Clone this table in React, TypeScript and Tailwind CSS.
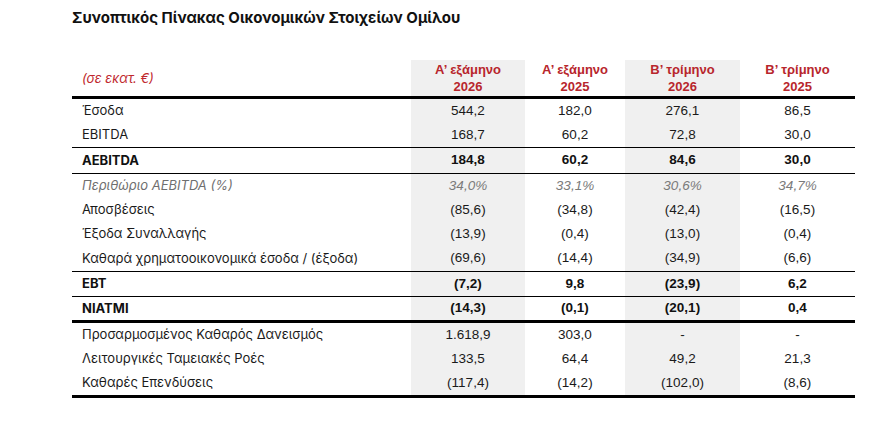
import React from "react";

type Row = {
  label: string;
  vals: string[];
  kind?: "bold" | "italic";
  h: string;
  border?: "thin" | "thick";
};

const rows: Row[] = [
  { label: "Έσοδα", vals: ["544,2", "182,0", "276,1", "86,5"], h: "h-[24px]" },
  { label: "EBITDA", vals: ["168,7", "60,2", "72,8", "30,0"], border: "thin", h: "h-[25px]" },
  { label: "AEBITDA", vals: ["184,8", "60,2", "84,6", "30,0"], kind: "bold", border: "thin", h: "h-[26px]" },
  { label: "Περιθώριο AEBITDA (%)", vals: ["34,0%", "33,1%", "30,6%", "34,7%"], kind: "italic", h: "h-[24px]" },
  { label: "Αποσβέσεις", vals: ["(85,6)", "(34,8)", "(42,4)", "(16,5)"], h: "h-[24px]" },
  { label: "Έξοδα Συναλλαγής", vals: ["(13,9)", "(0,4)", "(13,0)", "(0,4)"], h: "h-[24px]" },
  { label: "Καθαρά χρηματοοικονομικά έσοδα / (έξοδα)", vals: ["(69,6)", "(14,4)", "(34,9)", "(6,6)"], border: "thin", h: "h-[26px]" },
  { label: "EBT", vals: ["(7,2)", "9,8", "(23,9)", "6,2"], kind: "bold", border: "thin", h: "h-[25px]" },
  { label: "NIATMI", vals: ["(14,3)", "(0,1)", "(20,1)", "0,4"], kind: "bold", border: "thick", h: "h-[26px]" },
  { label: "Προσαρμοσμένος Καθαρός Δανεισμός", vals: ["1.618,9", "303,0", "-", "-"], h: "h-[24px]" },
  { label: "Λειτουργικές Ταμειακές Ροές", vals: ["133,5", "64,4", "49,2", "21,3"], h: "h-[24px]" },
  { label: "Καθαρές Επενδύσεις", vals: ["(117,4)", "(14,2)", "(102,0)", "(8,6)"], border: "thick", h: "h-[27px]" },
];

const headers = [
  ["Α’ εξάμηνο", "2026"],
  ["Α’ εξάμηνο", "2025"],
  ["Β’ τρίμηνο", "2026"],
  ["Β’ τρίμηνο", "2025"],
];

const grid = "grid grid-cols-[339px_114px_100px_115px_115px]";
const labelFont = "font-['Inter','Liberation_Sans',sans-serif]";
const numFont = "font-['Liberation_Sans','Arial',sans-serif]";

export default function App() {
  return (
    <div className="w-[879px] h-[423px] bg-white pl-[72px] pt-[8px] text-[#111]">
      <h1 className={`${labelFont} text-[15px] leading-[20px] font-bold`}>
        Συνοπτικός Πίνακας Οικονομικών Στοιχείων Ομίλου
      </h1>
      <div className="mt-[32px] w-[783px]">
        <div className={`${grid} h-[39px] border-b-[3px] border-black`}>
          <div className={`${labelFont} flex items-center pl-[10px] pt-[2px] text-[13px] italic text-[#c0282e]`}>
            (σε εκατ. €)
          </div>
          {headers.map((h, i) => (
            <div
              key={i}
              className={`${numFont} flex flex-col items-center justify-center text-[13px] leading-[17px] font-bold text-[#b8262c] ${
                i % 2 === 0 ? "bg-[#f0f0f0]" : ""
              }`}
            >
              <span>{h[0]}</span>
              <span>{h[1]}</span>
            </div>
          ))}
        </div>
        {rows.map((r, ri) => (
          <div
            key={ri}
            className={`${grid} ${r.h} ${
              r.border === "thin" ? "border-b border-black" : r.border === "thick" ? "border-b-[3px] border-black" : ""
            }`}
          >
            <div
              className={`${labelFont} flex items-center pl-[10px] text-[13px] ${
                r.kind === "bold" ? "font-bold" : r.kind === "italic" ? "italic text-[#6f6f6f]" : "text-[#1a1a1a]"
              }`}
            >
              {r.label}
            </div>
            {r.vals.map((v, i) => (
              <div
                key={i}
                className={`${numFont} flex items-center justify-center text-[13.5px] ${
                  i % 2 === 0 ? "bg-[#f0f0f0]" : ""
                } ${r.kind === "bold" ? "font-bold" : r.kind === "italic" ? "italic text-[#7a7a7a]" : "text-[#1a1a1a]"}`}
              >
                {v}
              </div>
            ))}
          </div>
        ))}
      </div>
    </div>
  );
}
